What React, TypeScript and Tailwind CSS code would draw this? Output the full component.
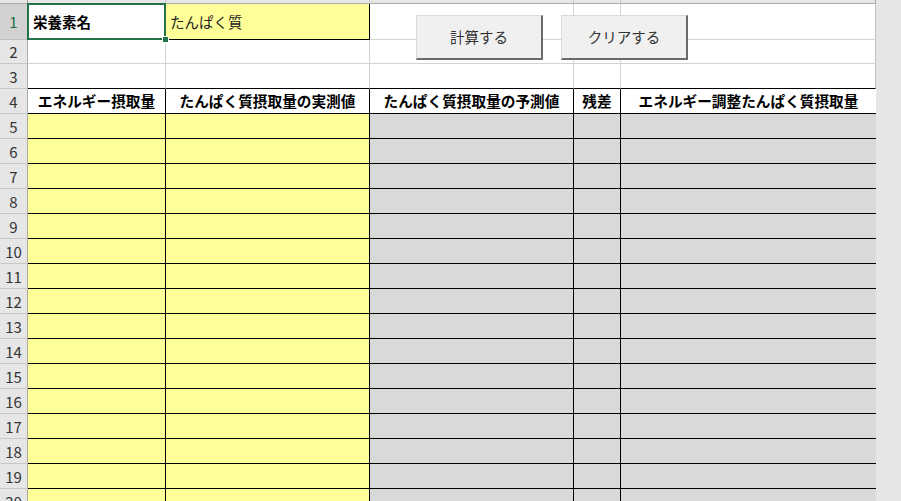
import React from "react";

const FONT = { fontFamily: '"Noto Sans CJK JP", "Noto Sans", sans-serif' };

const headers = [
  "エネルギー摂取量",
  "たんぱく質摂取量の実測値",
  "たんぱく質摂取量の予測値",
  "残差",
  "エネルギー調整たんぱく質摂取量",
];

const dataRows = Array.from({ length: 16 }, (_, i) => i + 5);

function RowHead({ n, active }: { n: number; active?: boolean }) {
  return (
    <div
      className={
        "flex items-center justify-center border-r border-b text-[15px] leading-none " +
        (active
          ? "bg-[#d2d2d2] text-[#217346] border-r-[#ababab] border-b-[#bfbfbf]"
          : "bg-[#e6e6e6] text-[#333333] border-r-[#ababab] border-b-[#c8c8c8]")
      }
    >
      {n}
    </div>
  );
}

export default function App() {
  return (
    <div className="relative w-[901px] h-[501px] overflow-hidden bg-[#e6e6e6]" style={FONT}>
      <div className="grid grid-cols-[28px_138px_204px_204px_47px_255px_25px] grid-rows-[4px_36px_24px_25px_repeat(17,25px)]">
        {/* top column-header strip */}
        <div className="bg-[#e6e6e6] border-b border-r border-[#ababab]" />
        <div className="bg-[#e6e6e6] border-b border-r border-b-[#ababab] border-r-[#c8c8c8]" />
        <div className="bg-[#e6e6e6] border-b border-r border-b-[#ababab] border-r-[#c8c8c8]" />
        <div className="bg-[#e6e6e6] border-b border-r border-b-[#ababab] border-r-[#c8c8c8]" />
        <div className="bg-[#e6e6e6] border-b border-r border-b-[#ababab] border-r-[#c8c8c8]" />
        <div className="bg-[#e6e6e6] border-b border-r border-b-[#ababab] border-r-[#ababab]" />
        <div className="bg-[#e6e6e6]" />

        {/* row 1 */}
        <RowHead n={1} active />
        <div className="relative bg-white flex items-center pl-[5px] text-[14.5px] font-bold text-black border-r border-b border-[#d4d4d4]">
          栄養素名
          <div className="absolute left-[-1px] top-[-1px] right-[-1px] bottom-[-1px] border-2 border-[#217346]" />
          <div className="absolute right-[-4px] bottom-[-4px] w-[7px] h-[7px] bg-[#217346] border border-white" />
        </div>
        <div className="bg-[#ffff99] flex items-center pl-[4px] text-[14.5px] text-[#222] border-r border-b border-black">
          たんぱく質
        </div>
        <div className="bg-white border-r border-b border-[#d4d4d4]" />
        <div className="bg-white border-r border-b border-[#d4d4d4]" />
        <div className="bg-white border-r border-b border-[#d4d4d4] border-r-[#bfbfbf]" />
        <div className="bg-[#e6e6e6]" />

        {/* row 2 */}
        <RowHead n={2} />
        <div className="bg-white border-r border-b border-[#d4d4d4]" />
        <div className="bg-white border-r border-b border-[#d4d4d4]" />
        <div className="bg-white border-r border-b border-[#d4d4d4]" />
        <div className="bg-white border-r border-b border-[#d4d4d4]" />
        <div className="bg-white border-r border-b border-[#d4d4d4] border-r-[#bfbfbf]" />
        <div className="bg-[#e6e6e6]" />

        {/* row 3 */}
        <RowHead n={3} />
        <div className="bg-white border-r border-b border-r-[#d4d4d4] border-b-black" />
        <div className="bg-white border-r border-b border-r-[#d4d4d4] border-b-black" />
        <div className="bg-white border-r border-b border-r-[#d4d4d4] border-b-black" />
        <div className="bg-white border-r border-b border-r-[#d4d4d4] border-b-black" />
        <div className="bg-white border-r border-b border-r-[#bfbfbf] border-b-black" />
        <div className="bg-[#e6e6e6]" />

        {/* row 4 headers */}
        <RowHead n={4} />
        {headers.map((h, i) => (
          <div
            key={h}
            className={
              "bg-white flex items-center justify-center text-[14.67px] font-bold text-black border-b border-black whitespace-nowrap " +
              (i < 4 ? "border-r" : "")
            }
          >
            {h}
          </div>
        ))}
        <div className="bg-[#e6e6e6]" />

        {dataRows.map((n) => (
          <React.Fragment key={n}>
            <RowHead n={n} />
            <div className="bg-[#ffff99] border-r border-b border-black" />
            <div className="bg-[#ffff99] border-r border-b border-black" />
            <div className="bg-[#d9d9d9] border-r border-b border-black" />
            <div className="bg-[#d9d9d9] border-r border-b border-black" />
            <div className="bg-[#d9d9d9] border-b border-black" />
            <div className="bg-[#e6e6e6]" />
          </React.Fragment>
        ))}
      </div>

      {/* floating buttons */}
      <div className="absolute left-[416px] top-[15px] w-[127px] h-[45px] flex items-center justify-center bg-[#f0f0f0] border-t border-l border-[#dadada] border-r-2 border-b-2 border-r-[#6b6b6b] border-b-[#6b6b6b] text-[14.5px] text-[#333]">
        計算する
      </div>
      <div className="absolute left-[561px] top-[15px] w-[127px] h-[45px] flex items-center justify-center bg-[#f0f0f0] border-t border-l border-[#dadada] border-r-2 border-b-2 border-r-[#6b6b6b] border-b-[#6b6b6b] text-[14.5px] text-[#333]">
        クリアする
      </div>
    </div>
  );
}
